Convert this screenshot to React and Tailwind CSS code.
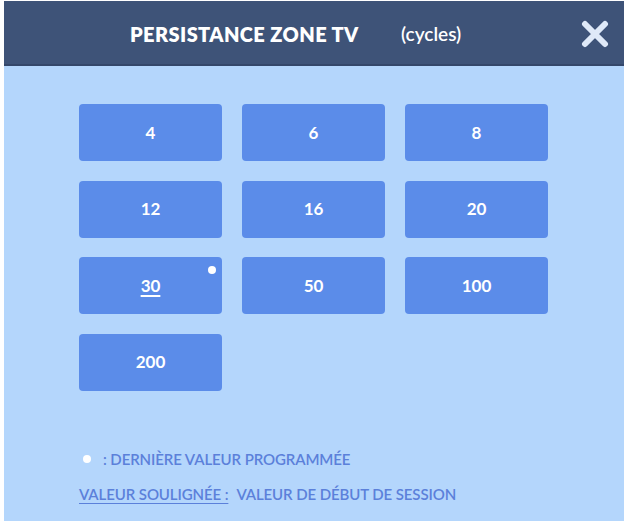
import React from "react";

const values = ["4", "6", "8", "12", "16", "20", "30", "50", "100", "200"];

export default function App() {
  return (
    <div className="w-[628px] h-[527px] bg-white pt-px pl-[4px]" style={{ fontFamily: "Lato, 'Open Sans', sans-serif" }}>
      <div className="w-[620px] h-[520px] bg-[#b4d6fc] flex flex-col">
        <div className="h-[65px] bg-[#3e5378] border-b-2 border-[#34476a] relative">
          <div className="absolute left-[126px] top-[18px] text-white font-extrabold text-[20px] tracking-[0.4px]">PERSISTANCE ZONE TV</div>
          <div className="absolute left-[397px] top-[19px] text-white font-semibold text-[19px]">(cycles)</div>
          <svg className="absolute left-[577px] top-[19px]" width="28" height="28" viewBox="0 0 28 28">
            <path d="M4 4 L24 24 M24 4 L4 24" stroke="#dfe9f8" strokeWidth="6" strokeLinecap="round" />
          </svg>
        </div>
        <div className="pl-[75px] pt-[38px]">
          <div className="grid grid-cols-[143px_143px_143px] gap-x-[20px] gap-y-[19.5px]">
            {values.map((v) => (
              <div key={v} className="relative h-[57px] rounded-[4px] bg-[#5b8ce9] flex items-center justify-center text-white font-bold text-[17px]">
                <span className={v === "30" ? "underline decoration-2 underline-offset-[3px]" : ""}>{v}</span>
                {v === "30" && <span className="absolute right-[6px] top-[9px] w-[8px] h-[8px] rounded-full bg-white" />}
              </div>
            ))}
          </div>
          <div className="mt-[57px] flex items-center text-[#5b80da] text-[15px] font-semibold tracking-[-0.1px]">
            <span className="ml-[4px] w-[8px] h-[8px] rounded-full bg-white" />
            <span className="ml-[12px]">: DERNIÈRE VALEUR PROGRAMMÉE</span>
          </div>
          <div className="mt-[13px] flex items-center text-[#5b80da] text-[15px] font-semibold tracking-[-0.1px]">
            <span className="underline underline-offset-[3px]">VALEUR SOULIGNÉE :</span>
            <span className="ml-[8px]">VALEUR DE DÉBUT DE SESSION</span>
          </div>
        </div>
      </div>
    </div>
  );
}
